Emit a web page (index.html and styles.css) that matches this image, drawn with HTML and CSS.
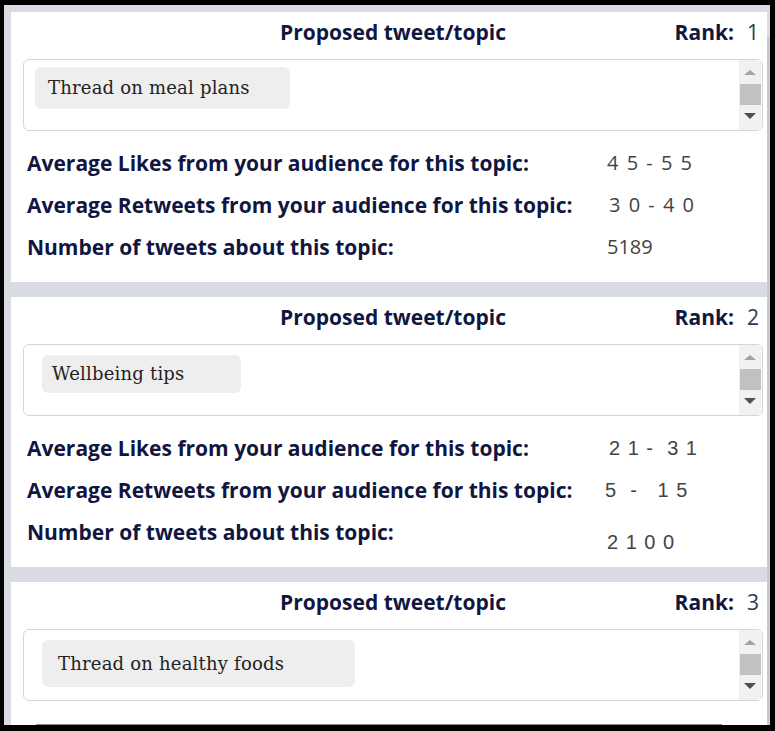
FILE: index.html
```html
<!DOCTYPE html>
<html lang="en">
<head>
    <meta charset="UTF-8">
    <meta name="viewport" content="width=device-width, initial-scale=1.0">
    <title>Proposed Topics</title>
    <link rel="stylesheet" href="styles.css">
</head>
<body>
    <div class="frame">
        <div class="page-scroll"></div>
        <div class="cards">
            <section class="card">
                <div class="card-head">
                    <h2 class="card-title">Proposed tweet/topic</h2>
                    <div class="rank"><span class="rank-label">Rank:</span><span class="rank-value">1</span></div>
                </div>
                <div class="topic-box">
                    <div class="topic-list">
                        <span class="chip chip-meal">Thread on meal plans</span>
                    </div>
                    <div class="fake-scroll">
                        <span class="arrow arrow-up"></span>
                        <span class="thumb"></span>
                        <span class="arrow arrow-down"></span>
                    </div>
                </div>
                <div class="stats">
                    <div class="stat-row">
                        <span class="stat-label">Average Likes from your audience for this topic:</span>
                        <span class="stat-value spaced">4 5 - 5 5</span>
                    </div>
                    <div class="stat-row">
                        <span class="stat-label">Average Retweets from your audience for this topic:</span>
                        <span class="stat-value spaced nudge">3 0 - 4 0</span>
                    </div>
                    <div class="stat-row">
                        <span class="stat-label">Number of tweets about this topic:</span>
                        <span class="stat-value">5189</span>
                    </div>
                </div>
            </section>

            <section class="card">
                <div class="card-head">
                    <h2 class="card-title">Proposed tweet/topic</h2>
                    <div class="rank"><span class="rank-label">Rank:</span><span class="rank-value">2</span></div>
                </div>
                <div class="topic-box">
                    <div class="topic-list">
                        <span class="chip chip-well">Wellbeing tips</span>
                    </div>
                    <div class="fake-scroll">
                        <span class="arrow arrow-up"></span>
                        <span class="thumb"></span>
                        <span class="arrow arrow-down"></span>
                    </div>
                </div>
                <div class="stats">
                    <div class="stat-row">
                        <span class="stat-label">Average Likes from your audience for this topic:</span>
                        <span class="stat-value arial nudge">2 1 - &nbsp;3 1</span>
                    </div>
                    <div class="stat-row">
                        <span class="stat-label">Average Retweets from your audience for this topic:</span>
                        <span class="stat-value arial pull">5 &nbsp;- &nbsp; 1 5</span>
                    </div>
                    <div class="stat-row">
                        <span class="stat-label">Number of tweets about this topic:</span>
                        <span class="stat-value arial low">2 1 0 0</span>
                    </div>
                </div>
            </section>

            <section class="card">
                <div class="card-head">
                    <h2 class="card-title">Proposed tweet/topic</h2>
                    <div class="rank"><span class="rank-label">Rank:</span><span class="rank-value">3</span></div>
                </div>
                <div class="topic-box">
                    <div class="topic-list">
                        <span class="chip chip-foods">Thread on healthy foods</span>
                    </div>
                    <div class="fake-scroll">
                        <span class="arrow arrow-up"></span>
                        <span class="thumb"></span>
                        <span class="arrow arrow-down"></span>
                    </div>
                </div>
                <div class="card-foot"></div>
            </section>
        </div>
    </div>
</body>
</html>
```

FILE: styles.css
```css
html, body {
    margin: 0;
    padding: 0;
    height: 731px;
    overflow: hidden;
    background: #000;
}
body {
    font-family: 'Open Sans', 'Noto Sans', Arial, sans-serif;
    color: #111640;
}
.frame {
    position: relative;
    box-sizing: border-box;
    height: 720px;
    margin: 5px 5px 0 4px;
    padding: 7px 3px 0 7px;
    background-color: #d9dce3;
    overflow: hidden;
}
.page-scroll {
    position: absolute;
    top: 32px;
    right: 0;
    bottom: 0;
    width: 3px;
    background-color: #c9cacd;
}
.cards {
    display: flex;
    flex-direction: column;
    gap: 15px;
}
.card {
    height: 270px;
    flex-shrink: 0;
    background-color: #fff;
}
.card-head {
    display: grid;
    grid-template-columns: 1fr auto 1fr;
    align-items: center;
    padding: 6px 8px 0 16px;
    height: 28px;
}
.card-title {
    grid-column: 2;
    margin: 0;
    font-size: 21px;
    font-weight: 700;
    line-height: 28px;
}
.rank {
    grid-column: 3;
    justify-self: end;
    font-size: 21px;
    line-height: 28px;
}
.rank-label {
    font-weight: 700;
    margin-right: 13px;
}
.rank-value {
    color: #2d3a4d;
}
.topic-box {
    display: flex;
    justify-content: space-between;
    box-sizing: border-box;
    height: 72px;
    margin: 13px 4px 0 12px;
    border: 1px solid #d5d6db;
    border-radius: 6px;
}
.topic-list {
    padding: 7px 0 0 11px;
}
.chip {
    display: inline-block;
    box-sizing: border-box;
    height: 42px;
    padding-left: 13px;
    background-color: #eeeeee;
    border-radius: 6px;
    font-family: 'DejaVu Serif', 'Liberation Serif', serif;
    font-size: 18px;
    letter-spacing: 0.2px;
    line-height: 42px;
    color: #222;
}
.chip-meal {
    width: 255px;
}
.chip-well {
    width: 199px;
    height: 38px;
    line-height: 38px;
    margin: 3px 0 0 7px;
    padding-left: 10px;
}
.chip-foods {
    width: 313px;
    height: 47px;
    line-height: 47px;
    margin: 3px 0 0 7px;
    padding-left: 16px;
}
.fake-scroll {
    display: flex;
    flex-direction: column;
    align-items: center;
    width: 22px;
    margin-right: 1px;
    background-color: #f1f1f1;
}
.arrow {
    width: 0;
    height: 0;
    border-left: 6px solid transparent;
    border-right: 6px solid transparent;
}
.arrow-up {
    margin: 10px 0 9px;
    border-bottom: 5px solid #a3a3a3;
}
.arrow-down {
    margin-top: 8px;
    border-top: 6px solid #505050;
}
.thumb {
    width: 21px;
    height: 21px;
    margin-left: 1px;
    background-color: #c1c1c1;
}
.stats {
    display: flex;
    flex-direction: column;
    gap: 12px;
    margin-top: 17px;
    padding-left: 16px;
}
.stat-row {
    display: grid;
    grid-template-columns: 580px 1fr;
    align-items: start;
    line-height: 30px;
}
.stat-label {
    font-size: 21px;
    font-weight: 700;
}
.stat-value {
    font-size: 20px;
    color: #444;
}
.spaced {
    letter-spacing: 1.5px;
}
.nudge {
    padding-left: 2px;
}
.pull {
    margin-left: -2px;
}
.arial {
    font-family: 'Liberation Sans', Arial, sans-serif;
    letter-spacing: 1px;
}
.low {
    padding-top: 10px;
}
.card-foot {
    margin: 23px 45px 0 25px;
    border-top: 1px solid #8a8a8a;
}
```
